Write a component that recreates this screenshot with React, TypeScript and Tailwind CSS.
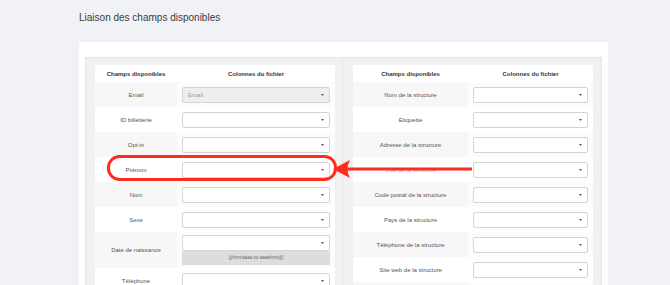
import React from "react";

type RowDef = { label: string; value?: string; hint?: boolean; faded?: boolean };

const leftRows: RowDef[] = [
  { label: "Email", value: "Email" },
  { label: "ID billetterie" },
  { label: "Opt-in" },
  { label: "Prénom" },
  { label: "Nom" },
  { label: "Sexe" },
  { label: "Date de naissance", hint: true },
  { label: "Téléphone" },
];

const rightRows: RowDef[] = [
  { label: "Nom de la structure" },
  { label: "Etiquette" },
  { label: "Adresse de la structure" },
  { label: "Ville de la structure", faded: true },
  { label: "Code postal de la structure" },
  { label: "Pays de la structure" },
  { label: "Téléphone de la structure" },
  { label: "Site web de la structure" },
  { label: "" },
];

function Caret() {
  return (
    <svg
      className="absolute right-[5px] top-1/2 -translate-y-1/2"
      width="3"
      height="3"
      viewBox="0 0 3 3"
    >
      <polygon points="0,0.5 3,0.5 1.5,2.5" fill="#555" />
    </svg>
  );
}

function Select({ value }: { value?: string }) {
  return (
    <div
      className={
        "relative flex h-[16px] w-full items-center rounded-[2px] border border-[#d4d4d4] pl-[5px] " +
        (value ? "bg-[#eeeeee]" : "bg-white")
      }
    >
      {value && <span className="text-[6px] leading-none text-[#999]">{value}</span>}
      <Caret />
    </div>
  );
}

function Table({ rows, labelW }: { rows: RowDef[]; labelW: string }) {
  return (
    <div className="w-[240px] bg-white">
      <div className="flex h-[17px] items-center text-[6px] font-bold leading-none text-[#333]">
        <div className={labelW + " text-center"}>Champs disponibles</div>
        <div className="flex-1 text-center">Colonnes du fichier</div>
      </div>
      {rows.map((r, i) => {
        const striped = i % 2 === 0;
        return (
          <div key={i} className={"flex " + (r.hint ? "h-[36px]" : "h-[25px]")}>
            <div
              className={
                labelW +
                " flex items-center justify-center text-center text-[6px] leading-none " +
                (r.faded ? "text-[#aaa] " : "text-[#555] ") +
                (striped ? "bg-[#f7f7f7]" : "bg-white")
              }
            >
              {r.label}
            </div>
            <div
              className={
                "flex flex-1 flex-col px-[5px] " +
                (r.hint ? "pt-[3px] " : "justify-center ") +
                (striped ? "bg-[#fcfcfc]" : "bg-white")
              }
            >
              <Select value={r.value} />
              {r.hint && (
                <div className="flex h-[14px] items-center justify-center bg-[#dddddd] text-[4.5px] italic leading-none text-[#666]">
                  (jj/mm/aaaa ou aaaa/mm/jj)
                </div>
              )}
            </div>
          </div>
        );
      })}
    </div>
  );
}

export default function App() {
  return (
    <div
      className="relative h-[285px] w-[670px] overflow-hidden bg-[#f1f2f6]"
      style={{ fontFamily: '"Liberation Sans", Arial, sans-serif' }}
    >
      <div className="pl-[79px] pt-[12px] text-[10px] leading-[12px] text-[#3a3a3a]">
        Liaison des champs disponibles
      </div>
      <div className="ml-[79px] mt-[18px] h-[300px] w-[529px] bg-white px-[6px] pt-[15px]">
        <div className="flex h-full">
          <div className="h-full w-[258px] border border-[#e4e4e4] bg-[#f1f1f1] pl-[9px] pr-[7px] pt-[7px]">
            <Table rows={leftRows} labelW="w-[82px]" />
          </div>
          <div className="h-full w-[259px] border border-l-0 border-[#e4e4e4] bg-[#f1f1f1] pl-[10px] pr-[8px] pt-[7px]">
            <Table rows={rightRows} labelW="w-[115px]" />
          </div>
        </div>
      </div>
      <svg
        className="pointer-events-none absolute left-0 top-0"
        width="670"
        height="285"
        viewBox="0 0 670 285"
      >
        <rect
          x="108.5"
          y="156.5"
          width="227"
          height="23"
          rx="11"
          fill="none"
          stroke="#ff2b1c"
          strokeWidth="3"
        />
        <line x1="344" y1="169" x2="472" y2="169" stroke="#ff2b1c" strokeWidth="3" />
        <path d="M333 169 L350 160 Q345 169 350 178 Z" fill="#ff2b1c" />
      </svg>
    </div>
  );
}
